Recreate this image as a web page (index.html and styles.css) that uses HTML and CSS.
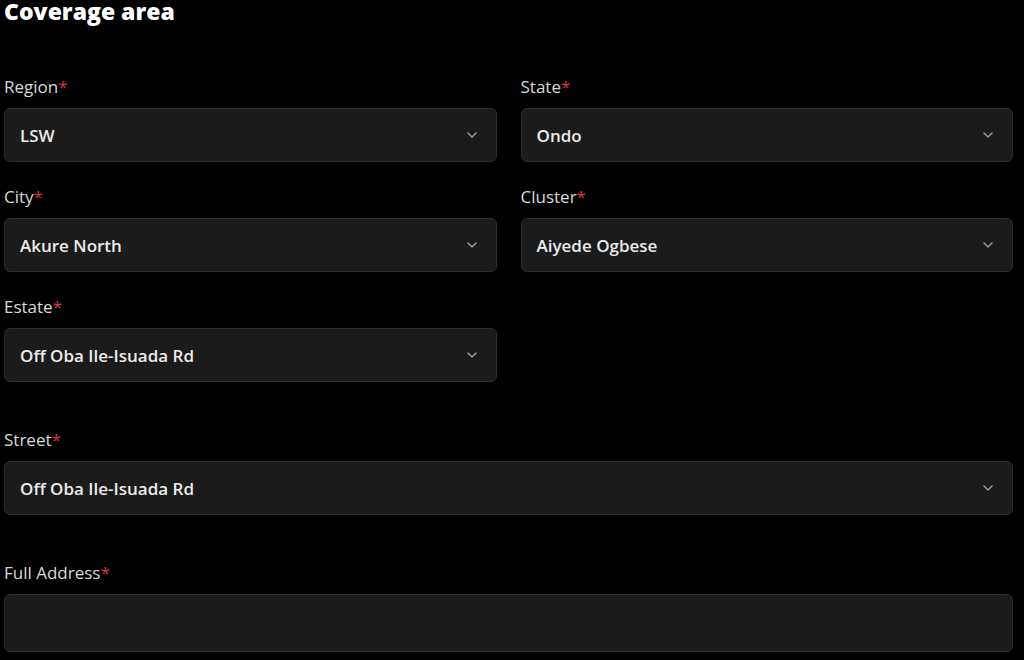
FILE: index.html
```html
<!DOCTYPE html>
<html lang="en">
  <head>
    <meta charset="utf-8">
    <title>Coverage area</title>
    <link rel="stylesheet" href="styles.css">
  </head>
  <body>
    <div class="coverage">
      <h2 class="coverage-title">Coverage area</h2>

      <div class="field-grid">
        <div class="field">
          <label class="field-label">Region<span class="req">*</span></label>
          <div class="select">
            <span class="select-value">LSW</span>
            <svg class="chevron" viewBox="0 0 10 6"><path d="M1 1l4 4 4-4"/></svg>
          </div>
        </div>
        <div class="field">
          <label class="field-label">State<span class="req">*</span></label>
          <div class="select">
            <span class="select-value">Ondo</span>
            <svg class="chevron" viewBox="0 0 10 6"><path d="M1 1l4 4 4-4"/></svg>
          </div>
        </div>
        <div class="field">
          <label class="field-label">City<span class="req">*</span></label>
          <div class="select">
            <span class="select-value">Akure North</span>
            <svg class="chevron" viewBox="0 0 10 6"><path d="M1 1l4 4 4-4"/></svg>
          </div>
        </div>
        <div class="field">
          <label class="field-label">Cluster<span class="req">*</span></label>
          <div class="select">
            <span class="select-value">Aiyede Ogbese</span>
            <svg class="chevron" viewBox="0 0 10 6"><path d="M1 1l4 4 4-4"/></svg>
          </div>
        </div>
        <div class="field">
          <label class="field-label">Estate<span class="req">*</span></label>
          <div class="select">
            <span class="select-value">Off Oba Ile-Isuada Rd</span>
            <svg class="chevron" viewBox="0 0 10 6"><path d="M1 1l4 4 4-4"/></svg>
          </div>
        </div>
      </div>

      <div class="field wide">
        <label class="field-label">Street<span class="req">*</span></label>
        <div class="select">
          <span class="select-value">Off Oba Ile-Isuada Rd</span>
          <svg class="chevron" viewBox="0 0 10 6"><path d="M1 1l4 4 4-4"/></svg>
        </div>
      </div>

      <div class="field wide">
        <label class="field-label">Full Address<span class="req">*</span></label>
        <div class="text-input"></div>
      </div>
    </div>
  </body>
</html>
```

FILE: styles.css
```css
* {
  box-sizing: border-box
}

body {
  margin: 0;
  padding: 0;
  background-color: #000;
  color: #e6e6e6;
  font-family: 'Open Sans', sans-serif;
  font-size: 16px
}

.coverage {
  width: 1013px;
  padding-left: 4px
}

.coverage-title {
  margin: 0 0 54px;
  font-size: 23px;
  line-height: 23px;
  font-weight: 800;
  color: #fff
}

.field-grid {
  display: grid;
  grid-template-columns: 1fr 1fr;
  column-gap: 24px;
  row-gap: 25px
}

.field-label {
  display: block;
  margin-bottom: 11px;
  font-size: 17px;
  line-height: 20px;
  font-weight: 500;
  color: #d9d9d9
}

.req {
  color: #d9363e
}

.select,
.text-input {
  display: flex;
  align-items: center;
  justify-content: space-between;
  height: 54px;
  padding: 0 19px 0 15px;
  background-color: #1b1b1b;
  border: 1px solid #2d2d2d;
  border-radius: 6px
}

.select-value {
  font-size: 17px;
  font-weight: 600;
  color: #ececec
}

.chevron {
  width: 10px;
  height: 6px;
  fill: none;
  stroke: #9a9a9a;
  stroke-width: 1.5;
  stroke-linecap: round;
  stroke-linejoin: round
}

.field.wide {
  margin-top: 48px
}

.text-input {
  height: 58px
}
```
